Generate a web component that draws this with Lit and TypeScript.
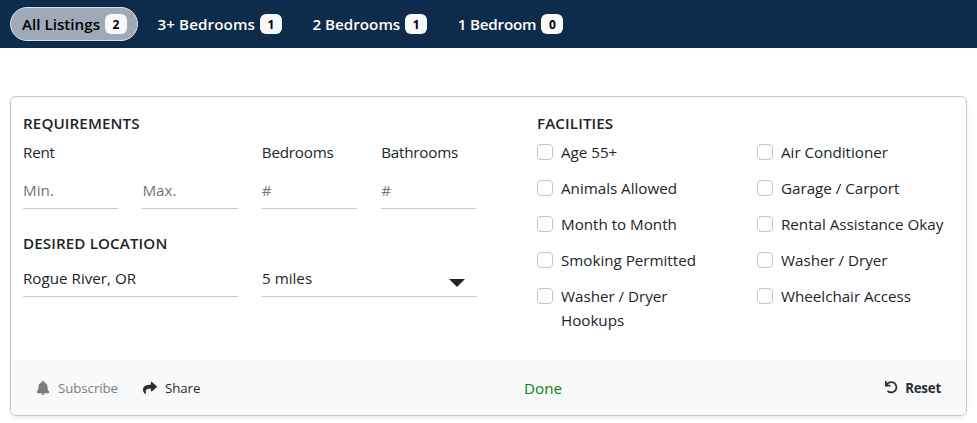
import { LitElement, html, css, svg } from "lit";
import { customElement } from "lit/decorators.js";
import { classMap } from "lit/directives/class-map.js";

const TABS = [
  { label: "All Listings", count: 2, active: true },
  { label: "3+ Bedrooms", count: 1, active: false },
  { label: "2 Bedrooms", count: 1, active: false },
  { label: "1 Bedroom", count: 0, active: false },
];

const FACILITIES = [
  ["Age 55+", "Animals Allowed", "Month to Month", "Smoking Permitted", "Washer / Dryer Hookups"],
  ["Air Conditioner", "Garage / Carport", "Rental Assistance Okay", "Washer / Dryer", "Wheelchair Access"],
];

const BELL = svg`<path d="M224 512c35.300 0 63.900-20 63.900-52H160.100c0 32 28.600 52 63.900 52zm215.400-133.700c-19.300-20.800-49.500-52-49.500-164.300 0-83.700-48.500-145.900-121.900-161.200V38c0-22-18-38-44-38s-44 16-44 38v14.800C106.600 68.100 58.100 130.300 58.100 214c0 112.300-30.200 143.500-49.500 164.300-6 6.400-8.700 14.200-8.600 21.700.1 16.400 13 48 32.100 48h383.800c19.100 0 32-31.600 32.100-48 .1-7.500-2.600-15.300-8.600-21.700z"/>`;
const SHARE = svg`<path d="M503.700 189.800L327.700 37.900C312.300 24.500 288 35.300 288 56v80C127.400 137.900 0 170.100 0 322.300c0 61.400 39.600 122.300 83.300 154.100 13.700 9.900 33.100-2.500 28.100-18.600C66.100 312.800 132.900 274.300 288 272v88c0 20.700 24.300 31.500 39.700 18.200l176-152c11.100-9.600 11.100-26.800 0-36.400z"/>`;
const UNDO = svg`<path d="M212.300 224.300H12c-6.600 0-12-5.400-12-12V12C0 5.400 5.400 0 12 0h48c6.600 0 12 5.400 12 12v78.100C117.800 39.300 184.300 7.500 258.200 8 395 9 504 119.200 504 256c0 137-111 248-248 248-64.100 0-122.500-24.300-166.500-64.100-5.100-4.600-5.300-12.600-.5-17.400l34-34c4.500-4.500 11.700-4.700 16.400-.5C170.200 415.300 211.600 432 256 432c97.300 0 176-78.700 176-176S353.300 80 256 80c-58.500 0-110.300 28.500-142.300 72.300h98.500c6.600 0 12 5.400 12 12v48c.1 6.600-5.300 12-11.900 12z"/>`;

@customElement("app-root")
export class AppRoot extends LitElement {
  static styles = css`
    :host {
      display: block;
      height: 423px;
      overflow: hidden;
      background: #fff;
      color: #212529;
      font: 15.2px/24px "Open Sans", "Noto Sans", sans-serif;
    }
    * { box-sizing: border-box; }
    .tabs {
      display: flex;
      height: 48px;
      padding: 7px 10px;
      background: #0d2b4b;
    }
    .tab {
      display: flex;
      align-items: center;
      height: 34px;
      gap: 5px;
      margin-right: 7.5px;
      padding: 0 10px 0 11px;
      border: 1px solid transparent;
      border-radius: 17px;
      color: #fff;
      font-weight: 600;
      white-space: nowrap;
    }
    .tab.active {
      color: #000;
      background: #9eaab7;
      border-color: #dbdfe4;
    }
    .tab:nth-child(2) { letter-spacing: 0.08px; }
    .tab:last-child { letter-spacing: -0.2px; }
    .tab > span:first-child { position: relative; top: -0.5px; }
    .badge {
      display: block;
      width: 22px;
      height: 20px;
      border-radius: 6px;
      background: #f8f9fa;
      color: #000;
      text-align: center;
      font-size: 12px;
      line-height: 21px;
      font-weight: 700;
      letter-spacing: 0;
    }
    .card {
      display: flex;
      flex-direction: column;
      height: 320px;
      margin: 48px 10px 0;
      border: 1px solid #c8c8c8;
      border-radius: 6px;
      overflow: hidden;
      box-shadow: 0 2px 4px rgba(0, 0, 0, 0.075);
    }
    .body {
      display: flex;
      flex: 1;
      padding: 14px 12px 0;
    }
    .left { width: 454px; margin-right: 60px; }
    .title { font-weight: 600; line-height: 24px; height: 24px; margin-bottom: 5px; letter-spacing: 0.1px; }
    .grid { display: grid; grid-template-columns: repeat(4, 95.3px); column-gap: 24.1px; }
    .label { height: 24px; letter-spacing: -0.2px; }
    .field {
      height: 38px;
      margin-top: 7px;
      padding-top: 7px;
      border-bottom: 1px solid #ccc;
      color: #6c757d;
    }
    .spaced { margin-top: 22px; margin-bottom: 0; }
    .wide { display: grid; grid-template-columns: 215px 215px; column-gap: 24px; }
    .wide .field { display: flex; justify-content: space-between; margin-top: 5px; height: 37px; padding: 6px 12px 0 0; color: #212529; }
    .caret { width: 16px; height: 8px; margin-top: 13px; fill: #212529; }
    .options { display: flex; }
    .column { width: 220px; }
    .option { display: flex; margin-bottom: 12px; width: 200px; }
    .box {
      flex: none;
      width: 16px;
      height: 16px;
      margin: 4px 8px 0 0;
      border: 1px solid #c5c5c5;
      border-radius: 4px;
      background: #fff;
    }
    .option .name { max-width: 164px; white-space: nowrap; letter-spacing: -0.02px; }
    .option .name.wrap { width: 120px; white-space: normal; }
    .footer {
      display: grid;
      grid-template-columns: 513px 1fr auto;
      align-items: center;
      height: 55px;
      padding-right: 25px;
      background: #f8f9fb;
    }
    .actions { display: flex; align-items: center; font-size: 13.3px; }
    .start { padding-left: 25px; letter-spacing: -0.08px; }
    .action { display: flex; align-items: center; }
    .subscribe { color: #7b7c7d; margin-right: 25px; }
    .share { color: #2a2b2d; }
    .reset { font-weight: 700; color: #2c2d2f; letter-spacing: -0.2px; }
    .icon { width: 14px; height: 14px; margin-right: 8px; fill: currentColor; }
    .reset .icon { width: 12.5px; height: 12.5px; margin-right: 7.5px; }
    .done { color: #0a850a; }
  `;

  render() {
    return html`
      <nav class="tabs">
        ${TABS.map(
          (t) => html`<div class=${classMap({ tab: true, active: t.active })}>
            <span>${t.label}</span><span class="badge">${t.count}</span>
          </div>`
        )}
      </nav>
      <section class="card">
        <div class="body">
          <div class="left">
            <div class="title">REQUIREMENTS</div>
            <div class="grid">
              <span class="label">Rent</span><span></span>
              <span class="label">Bedrooms</span><span class="label">Bathrooms</span>
              ${["Min.", "Max.", "#", "#"].map((p) => html`<div class="field">${p}</div>`)}
            </div>
            <div class="title spaced">DESIRED LOCATION</div>
            <div class="wide">
              <div class="field"><span>Rogue River, OR</span></div>
              <div class="field">
                <span>5 miles</span>
                <svg class="caret" viewBox="0 0 16 8"><path d="M0 0h16L8 8z" /></svg>
              </div>
            </div>
          </div>
          <div>
            <div class="title">FACILITIES</div>
            <div class="options">
              ${FACILITIES.map(
                (col) => html`<div class="column">
                  ${col.map(
                    (name) => html`<div class="option">
                      <span class="box"></span>
                      <span class=${classMap({ name: true, wrap: name.endsWith("Hookups") })}>${name}</span>
                    </div>`
                  )}
                </div>`
              )}
            </div>
          </div>
        </div>
        <div class="footer">
          <div class="actions start">
            <span class="action subscribe"><svg class="icon" viewBox="0 0 448 512">${BELL}</svg>Subscribe</span>
            <span class="action share"><svg class="icon" viewBox="0 0 512 512">${SHARE}</svg>Share</span>
          </div>
          <span class="done">Done</span>
          <div class="actions reset"><svg class="icon" viewBox="0 0 512 512">${UNDO}</svg>Reset</div>
        </div>
      </section>
    `;
  }
}
